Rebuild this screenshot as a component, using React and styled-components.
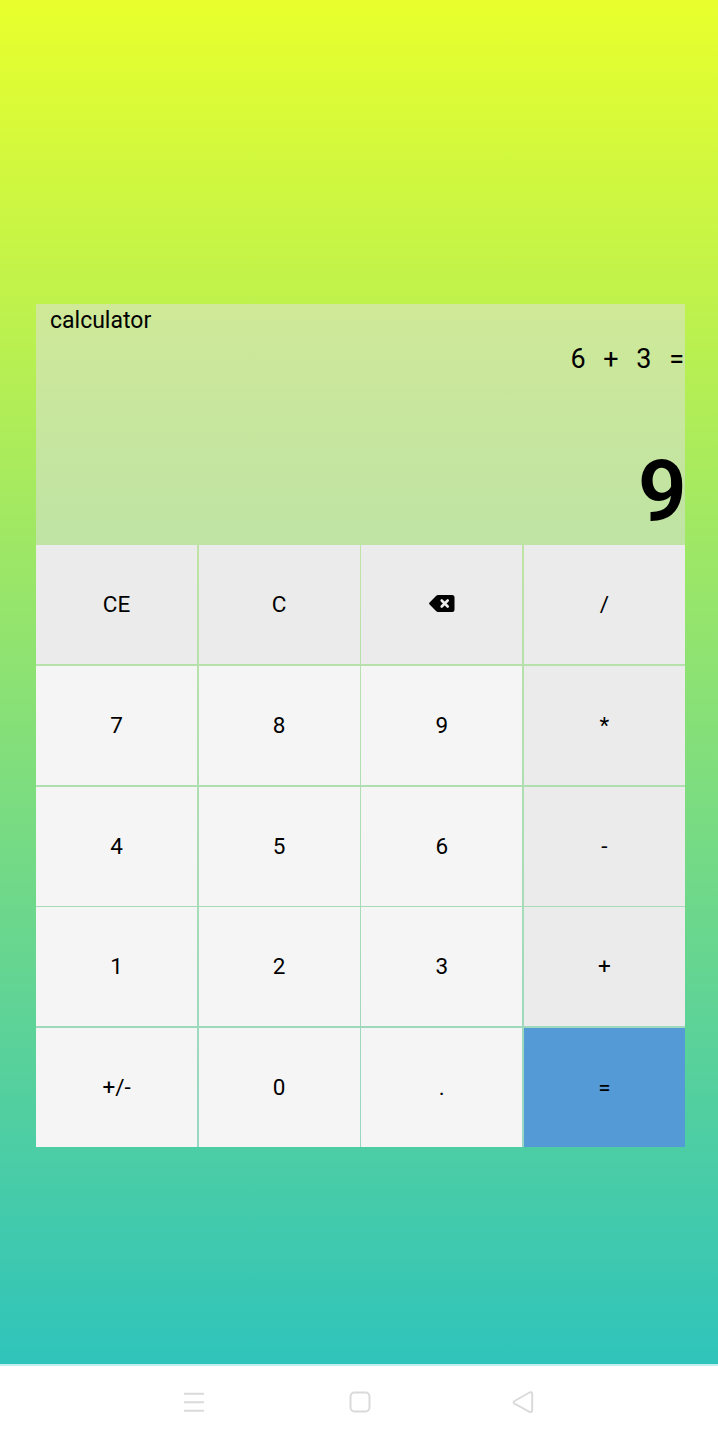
import React from 'react';
import styled, { createGlobalStyle } from 'styled-components';

const GlobalStyle = createGlobalStyle`
  * { box-sizing: border-box; }
  body { margin: 0; font-family: Roboto, sans-serif; color: #000; }
`;

const Screen = styled.div`
  height: 1438px;
  display: flex;
  flex-direction: column;
`;

const Backdrop = styled.main`
  height: 1364px;
  padding: 304px 33px 0 36px;
  background: linear-gradient(#e8ff2c, #2fc4bb);
`;

const Calculator = styled.section`
  height: 843px;
  display: flex;
  flex-direction: column;
  background: rgba(224, 224, 228, 0.5);
`;

const Display = styled.header`
  height: 241px;
  display: flex;
  flex-direction: column;
`;

const Title = styled.div`
  padding: 3px 0 0 14px;
  font-size: 23px;
  line-height: 27px;
`;

const Expression = styled.div`
  height: 50px;
  padding-right: 1px;
  line-height: 50px;
  font-size: 27px;
  word-spacing: 11px;
  text-align: right;
`;

const Result = styled.div`
  margin: 58px -2px 0 0;
  font-size: 86px;
  line-height: 100px;
  font-weight: 600;
  text-align: right;
`;

const Keypad = styled.div`
  display: grid;
  grid-template-columns: repeat(4, 1fr);
  grid-template-rows: 120px 120px 119px 120px 119px;
  gap: 1px 1.6px;
`;

const keyColors = { digit: '#f5f5f5', action: '#ebebeb', equals: '#549ad6' };

const Key = styled.button`
  height: 119px;
  border: 0;
  padding: 0 0 1px;
  display: flex;
  align-items: center;
  justify-content: center;
  background: ${({ $kind }) => keyColors[$kind]};
  color: #000;
  font: 22.5px Roboto, sans-serif;
`;

const NavBar = styled.nav`
  height: 74px;
  display: flex;
  border-top: 2px solid #c0efeb;
  padding: 23px 179px 0;
  justify-content: space-between;
  background: #fff;
`;

const NavIcon = styled.svg`
  width: 30px;
  height: 26px;
  fill: none;
  stroke: #dadada;
  stroke-width: 2;
  stroke-linejoin: round;
`;

const DeleteIcon = styled.svg`
  width: 26px;
  height: 18px;
`;

const Backspace = () => (
  <DeleteIcon viewBox="0 0 26 18">
    <path d="M9 0h14Q25.500 0 25.500 2.500v12q0 2.500-2.500 2.500H9q-1 0-2-1L.6 9.500q-1-1 0-2L7 1Q8 0 9 0Z" fill="#000" />
    <path d="m12.700 5.500 6 6m0-6-6 6" stroke="#ebebeb" strokeWidth="2.600" strokeLinecap="round" />
  </DeleteIcon>
);

const keys = [
  ['CE', 'action'], ['C', 'action'], ['backspace', 'action'], ['/', 'action'],
  ['7', 'digit'], ['8', 'digit'], ['9', 'digit'], ['*', 'action'],
  ['4', 'digit'], ['5', 'digit'], ['6', 'digit'], ['-', 'action'],
  ['1', 'digit'], ['2', 'digit'], ['3', 'digit'], ['+', 'action'],
  ['+/-', 'digit'], ['0', 'digit'], ['.', 'digit'], ['=', 'equals'],
];

export default function App() {
  return (
    <Screen>
      <GlobalStyle />
      <Backdrop>
        <Calculator>
          <Display>
            <Title>calculator</Title>
            <Expression>6 + 3 =</Expression>
            <Result>9</Result>
          </Display>
          <Keypad>
            {keys.map(([label, kind]) => (
              <Key key={label} $kind={kind}>{label === 'backspace' ? <Backspace /> : label}</Key>
            ))}
          </Keypad>
        </Calculator>
      </Backdrop>
      <NavBar>
        <NavIcon viewBox="0 0 30 26"><path d="M5 4.700h20M5 13.200h20M5 21.700h20" /></NavIcon>
        <NavIcon viewBox="0 0 30 26"><rect x="6.500" y="3.500" width="19" height="19" rx="4" /></NavIcon>
        <NavIcon viewBox="0 0 30 26"><path d="M20.500 3.500 5.500 12q-2 1.300 0 2.600l15 8.200q2.700 1 2.700-1.600V5q0-2.500-2.700-1.500Z" /></NavIcon>
      </NavBar>
    </Screen>
  );
}
